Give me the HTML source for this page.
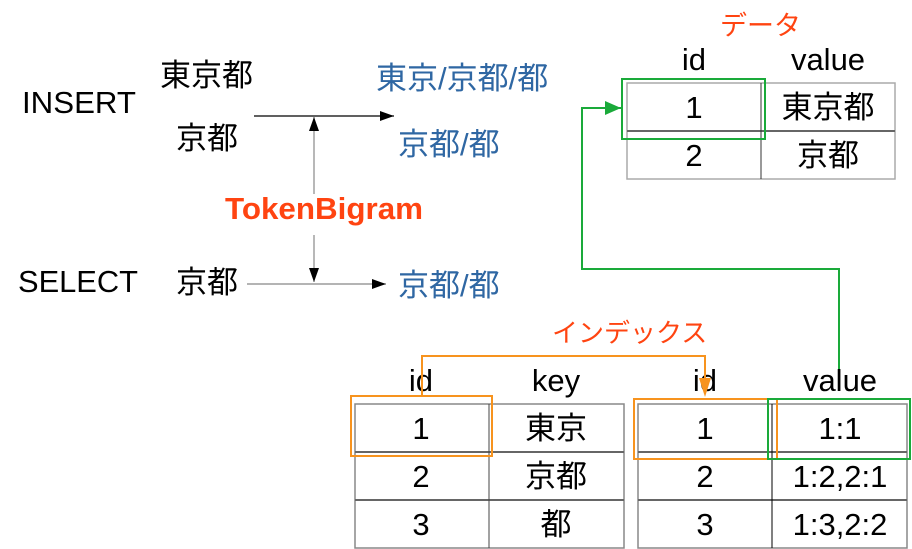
<!DOCTYPE html>
<html><head><meta charset="utf-8"><style>
html,body{margin:0;padding:0;background:#fff;width:912px;height:549px;overflow:hidden}
svg{display:block}
text{font-family:"Liberation Sans","Noto Sans CJK JP",sans-serif;font-size:31px}
</style></head><body>
<svg width="912" height="549" viewBox="0 0 912 549" xmlns="http://www.w3.org/2000/svg">
<defs>
<marker id="ab" markerWidth="14" markerHeight="10" refX="14" refY="5" orient="auto" markerUnits="userSpaceOnUse"><path d="M0,0 L14,5 L0,10z" fill="#000"/></marker>
<marker id="ag" markerWidth="16" markerHeight="14" refX="16" refY="7" orient="auto" markerUnits="userSpaceOnUse"><path d="M0,0 L16,7 L0,14z" fill="#1aaa3a"/></marker>
</defs>
<text x="22" y="113" textLength="114" lengthAdjust="spacingAndGlyphs">INSERT</text>
<text x="160" y="86">東京都</text>
<text x="176" y="149">京都</text>
<text x="18" y="292" textLength="120" lengthAdjust="spacingAndGlyphs">SELECT</text>
<text x="176" y="293">京都</text>
<g fill="#2f67a3">
<text x="376" y="89">東京/京都/都</text>
<text x="398" y="155">京都/都</text>
<text x="398" y="296">京都/都</text>
</g>
<line x1="254" y1="116" x2="394" y2="116" stroke="#000" stroke-width="1.2" marker-end="url(#ab)"/>
<line x1="247" y1="284" x2="386" y2="284" stroke="#888" stroke-width="1.2" marker-end="url(#ab)"/>
<line x1="314" y1="194" x2="314" y2="117" stroke="#888" stroke-width="1.2" marker-end="url(#ab)"/>
<line x1="314" y1="235" x2="314" y2="282" stroke="#888" stroke-width="1.2" marker-end="url(#ab)"/>
<text x="225" y="219" font-weight="bold" fill="#ff4411" textLength="198" lengthAdjust="spacingAndGlyphs">TokenBigram</text>
<text x="720" y="35" fill="#ff4411" style="font-size:27px">データ</text>
<text x="694" y="70" text-anchor="middle">id</text>
<text x="828" y="70" text-anchor="middle">value</text>
<rect x="627" y="83" width="268" height="96" stroke="#aaa" stroke-width="1.5" fill="none"/>
<line x1="627" y1="131" x2="895" y2="131" stroke="#666" stroke-width="2"/>
<line x1="761" y1="83" x2="761" y2="179" stroke="#333" stroke-width="1"/>
<text x="694" y="118" text-anchor="middle">1</text>
<text x="828" y="118" text-anchor="middle">東京都</text>
<text x="694" y="166" text-anchor="middle">2</text>
<text x="828" y="166" text-anchor="middle">京都</text>
<rect x="622" y="79" width="143" height="60" fill="none" stroke="#1aaa3a" stroke-width="2"/>
<polyline points="839,372 839,269 582,269 582,108 621,108" fill="none" stroke="#1aaa3a" stroke-width="2" marker-end="url(#ag)"/>
<text x="552" y="342" fill="#ff4411" style="font-size:26px">インデックス</text>
<text x="421" y="391" text-anchor="middle">id</text>
<text x="556" y="391" text-anchor="middle">key</text>
<text x="705" y="391" text-anchor="middle">id</text>
<text x="840" y="391" text-anchor="middle">value</text>
<g stroke="#888" stroke-width="1.5" fill="none">
<rect x="355" y="404" width="269" height="144"/>
<rect x="638" y="404" width="269" height="144"/>
</g>
<g stroke="#666" stroke-width="2">
<line x1="355" y1="452" x2="624" y2="452"/><line x1="355" y1="500" x2="624" y2="500"/>
<line x1="638" y1="452" x2="907" y2="452"/><line x1="638" y1="500" x2="907" y2="500"/>
</g>
<line x1="489" y1="404" x2="489" y2="548" stroke="#444" stroke-width="1"/>
<line x1="772" y1="404" x2="772" y2="548" stroke="#000" stroke-width="1"/>
<text x="421" y="439" text-anchor="middle">1</text>
<text x="556" y="439" text-anchor="middle">東京</text>
<text x="421" y="487" text-anchor="middle">2</text>
<text x="556" y="487" text-anchor="middle">京都</text>
<text x="421" y="535" text-anchor="middle">3</text>
<text x="556" y="535" text-anchor="middle">都</text>
<text x="705" y="439" text-anchor="middle">1</text>
<text x="840" y="439" text-anchor="middle">1:1</text>
<text x="705" y="487" text-anchor="middle">2</text>
<text x="840" y="487" text-anchor="middle">1:2,2:1</text>
<text x="705" y="535" text-anchor="middle">3</text>
<text x="840" y="535" text-anchor="middle">1:3,2:2</text>
<rect x="351" y="396" width="141" height="60" fill="none" stroke="#f7931e" stroke-width="2"/>
<rect x="634" y="399" width="143" height="60" fill="none" stroke="#f7931e" stroke-width="2"/>
<rect x="768" y="399" width="142" height="60" fill="none" stroke="#1aaa3a" stroke-width="2"/>
<polyline points="422,396 422,356 705,356 705,384" fill="none" stroke="#f7931e" stroke-width="2"/>
<path d="M699,378 L711,378 L705,397z" fill="#f7931e"/>
</svg>
</body></html>
